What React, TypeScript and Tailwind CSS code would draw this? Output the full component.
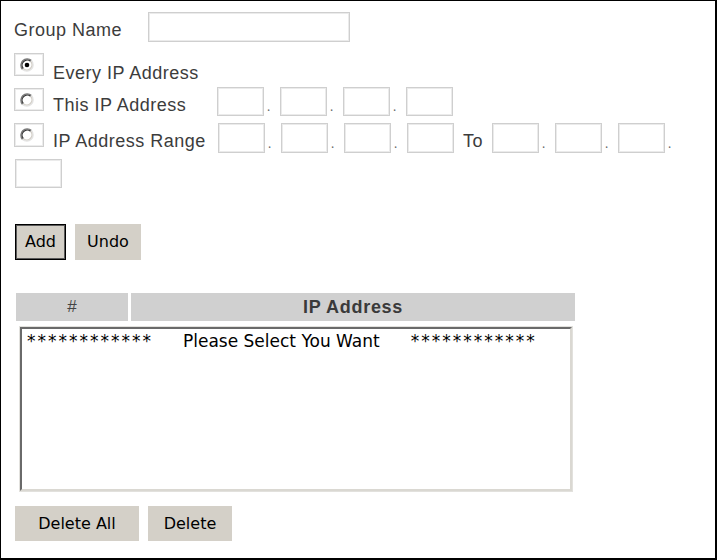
import React from "react";

function Radio({ checked }: { checked?: boolean }) {
  return (
    <svg width="14" height="14" viewBox="0 0 14 14" className="block">
      <circle cx="7" cy="7" r="6.3" fill="#ffffff" />
      <path d="M2.55 11.45 A6.3 6.3 0 0 1 11.45 2.55" fill="none" stroke="#7a7a7a" strokeWidth="1.4" />
      <path d="M3.4 10.6 A5.1 5.1 0 0 1 10.6 3.4" fill="none" stroke="#333333" strokeWidth="1.2" />
      <path d="M11.45 2.55 A6.3 6.3 0 0 1 2.55 11.45" fill="none" stroke="#e4e4e4" strokeWidth="1.4" />
      <path d="M10.6 3.4 A5.1 5.1 0 0 1 3.4 10.6" fill="none" stroke="#cfcbc3" strokeWidth="1.2" />
      {checked && <circle cx="7" cy="7" r="2.3" fill="#000000" />}
    </svg>
  );
}

function RadioBox({ checked, h }: { checked?: boolean; h: string }) {
  return (
    <div
      className={`w-[30px] shrink-0 ${h} border border-[#cfcfcf] shadow-[inset_0_0_0_1px_#ececec] pl-[5px] pt-[4px] bg-white`}
    >
      <Radio checked={checked} />
    </div>
  );
}

function Box({ w, h }: { w: string; h: string }) {
  return <div className={`${w} ${h} border border-[#cfcfcf] shadow-[inset_0_0_0_1px_#ebebeb] bg-white shrink-0`} />;
}

function Dot() {
  return (
    <div className="w-[16px] h-full flex items-end shrink-0">
      <span className="text-[12px] leading-none pb-[3px] pl-[3px] text-[#666]">.</span>
    </div>
  );
}

function IpInputs({ h, trailing }: { h: string; trailing?: boolean }) {
  return (
    <div className="flex h-full shrink-0">
      <Box w="w-[47px]" h={h} />
      <Dot />
      <Box w="w-[47px]" h={h} />
      <Dot />
      <Box w="w-[47px]" h={h} />
      {trailing ? <Dot /> : null}
    </div>
  );
}

export default function App() {
  const label =
    "[font-family:Liberation_Sans,Arial,sans-serif] text-[18px] tracking-[0.5px] leading-[20px] text-[#3c3c3c] whitespace-nowrap shrink-0";
  const btn =
    "[font-family:DejaVu_Sans,Verdana,sans-serif] text-[16px] text-black bg-[#d4d0c8] flex items-center justify-center shrink-0";
  return (
    <div className="w-[717px] h-[560px] box-border border-t border-l border-r-2 border-b-2 border-black bg-white flex flex-col pl-[13px] overflow-hidden">
      {/* Group name */}
      <div className="mt-[11px] h-[30px] flex">
        <div className={`${label} w-[134px] pt-[8px]`}>Group Name</div>
        <Box w="w-[202px]" h="h-[30px]" />
      </div>

      {/* Every IP */}
      <div className="mt-[11px] h-[30px] flex">
        <RadioBox checked h="h-[23px]" />
        <div className={`${label} ml-[9px] pt-[10px]`}>Every IP Address</div>
      </div>

      {/* This IP */}
      <div className="mt-[4px] h-[30px] flex">
        <div className="mt-[1px] shrink-0">
          <RadioBox h="h-[23px]" />
        </div>
        <div className={`${label} ml-[9px] pt-[8px] w-[164px]`}>This IP Address</div>
        <div className="flex h-[29px] shrink-0">
          <IpInputs h="h-[29px]" trailing />
          <Box w="w-[47px]" h="h-[29px]" />
        </div>
      </div>

      {/* Range */}
      <div className="mt-[6px] h-[30px] flex">
        <RadioBox h="h-[24px]" />
        <div className={`${label} ml-[9px] pt-[8px] w-[165px]`}>IP Address Range</div>
        <div className="flex h-[30px] shrink-0">
          <IpInputs h="h-[30px]" trailing />
          <Box w="w-[47px]" h="h-[30px]" />
          <div className={`${label} ml-[9px] pt-[8px] w-[29px]`}>To</div>
          <IpInputs h="h-[30px]" trailing />
        </div>
      </div>

      {/* wrapped input */}
      <div className="mt-[6px] ml-[1px] flex">
        <Box w="w-[47px]" h="h-[29px]" />
      </div>

      {/* Add / Undo */}
      <div className="mt-[36px] ml-[1px] flex gap-[9px] h-[36px]">
        <button className={`${btn} w-[51px] h-[36px] border border-black shadow-[inset_0_0_0_1px_#5a5a5a]`}>Add</button>
        <button className={`${btn} w-[66px] h-[36px]`}>Undo</button>
      </div>

      {/* table header */}
      <div className="mt-[33px] ml-[2px] flex gap-[3px] h-[28px]">
        <div className="w-[112px] h-full bg-[#d0d0d0] flex items-center justify-center [font-family:Liberation_Sans,Arial,sans-serif] text-[17px] text-[#444]">
          #
        </div>
        <div className="w-[444px] h-full bg-[#d0d0d0] flex items-center justify-center [font-family:Liberation_Sans,Arial,sans-serif] font-bold text-[18px] tracking-[0.7px] text-[#3a3a3a]">
          IP Address
        </div>
      </div>

      {/* list box */}
      <div className="mt-[5px] ml-[5px] w-[554px] h-[166px] border border-[#e2e1dd] bg-white">
        <div className="w-full h-full border-2 border-t-[#6a6a6a] border-l-[#6a6a6a] border-r-[#dad8d2] border-b-[#dad8d2] pl-[5px] pt-[2px]">
          <div className="flex [font-family:DejaVu_Sans,Verdana,sans-serif] text-[17px] leading-[20px] text-black whitespace-nowrap">
            <span className="tracking-[2px]">************</span>
            <span className="ml-[30px]">Please Select You Want</span>
            <span className="ml-[31px] tracking-[2px]">************</span>
          </div>
        </div>
      </div>

      {/* bottom buttons */}
      <div className="mt-[14px] ml-[1px] flex gap-[9px] h-[35px]">
        <button className={`${btn} w-[124px] h-[35px]`}>Delete All</button>
        <button className={`${btn} w-[84px] h-[35px]`}>Delete</button>
      </div>
    </div>
  );
}
